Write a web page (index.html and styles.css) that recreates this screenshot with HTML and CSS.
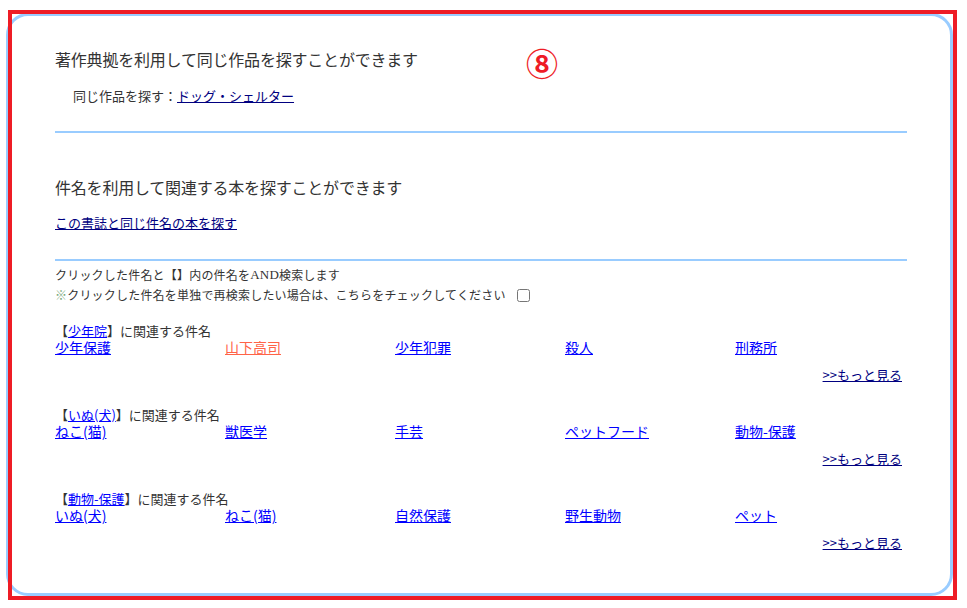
FILE: index.html
```html
<!DOCTYPE html>
<html lang="ja">
<head>
    <meta charset="UTF-8">
    <title>件名検索</title>
    <link rel="stylesheet" href="styles.css">
</head>
<body>
    <div class="panel">
        <h2 class="title">著作典拠を利用して同じ作品を探すことができます</h2>
        <p class="same-work">同じ作品を探す：<a class="nav-link" href="#">ドッグ・シェルター</a></p>

        <div class="rule rule-1"></div>

        <h2 class="title title-2">件名を利用して関連する本を探すことができます</h2>
        <p class="same-subject"><a class="nav-link" href="#">この書誌と同じ件名の本を探す</a></p>

        <div class="rule rule-2"></div>

        <div class="notes">
            <p>クリックした件名と【】内の件名を<span class="serif">AND</span>検索します</p>
            <p><span class="mark">※</span>クリックした件名を単独で再検索したい場合は、こちらをチェックしてください<input type="checkbox" class="single"></p>
        </div>

        <div class="group">
            <p class="group-label">【<a href="#">少年院</a>】に関連する件名</p>
            <ul class="subjects">
                <li><a href="#">少年保護</a></li>
                <li><a href="#" class="visited">山下高司</a></li>
                <li><a href="#">少年犯罪</a></li>
                <li><a href="#">殺人</a></li>
                <li><a href="#">刑務所</a></li>
            </ul>
            <p class="more"><a class="nav-link" href="#">&gt;&gt;もっと見る</a></p>
        </div>

        <div class="group">
            <p class="group-label">【<a href="#">いぬ(犬)</a>】に関連する件名</p>
            <ul class="subjects">
                <li><a href="#">ねこ(猫)</a></li>
                <li><a href="#">獣医学</a></li>
                <li><a href="#">手芸</a></li>
                <li><a href="#">ペットフード</a></li>
                <li><a href="#">動物-保護</a></li>
            </ul>
            <p class="more"><a class="nav-link" href="#">&gt;&gt;もっと見る</a></p>
        </div>

        <div class="group">
            <p class="group-label">【<a href="#">動物-保護</a>】に関連する件名</p>
            <ul class="subjects">
                <li><a href="#">いぬ(犬)</a></li>
                <li><a href="#">ねこ(猫)</a></li>
                <li><a href="#">自然保護</a></li>
                <li><a href="#">野生動物</a></li>
                <li><a href="#">ペット</a></li>
            </ul>
            <p class="more"><a class="nav-link" href="#">&gt;&gt;もっと見る</a></p>
        </div>
    </div>

    <!-- annotation overlay -->
    <div class="marker-box"></div>
    <div class="marker-num">⑧</div>
</body>
</html>
```

FILE: styles.css
```css
* {
    margin: 0;
    padding: 0;
    box-sizing: border-box;
}

body {
    font-family: "Noto Sans CJK JP", "Noto Sans", sans-serif;
    color: #333;
    background: #fff;
    width: 967px;
    height: 608px;
    overflow: hidden;
    position: relative;
}

a {
    color: #0000ff;
    text-decoration: underline;
}

a.nav-link {
    color: #000080;
}

a.visited {
    color: #ff6347;
}

.panel {
    margin: 13px 0 0 6px;
    width: 947px;
    height: 583px;
    border: 3px solid #99ccff;
    border-radius: 22px;
    padding: 33px 43px 0 46px;
}

.title {
    font-size: 16px;
    font-weight: normal;
    line-height: 20px;
    letter-spacing: -0.2px;
}

.title-2 {
    margin-top: 44px;
}

.same-work {
    font-size: 13px;
    line-height: 18px;
    margin-top: 18px;
    padding-left: 18px;
}

.same-subject {
    font-size: 13px;
    line-height: 18px;
    margin-top: 17px;
}

.rule {
    height: 2px;
    background: #99ccff;
}

.rule-1 {
    margin-top: 26px;
}

.rule-2 {
    margin-top: 27px;
}

.notes {
    margin-top: 4px;
    font-size: 12px;
    line-height: 20px;
    letter-spacing: 0.2px;
}

.notes p {
    display: flex;
    align-items: center;
}

.serif {
    font-family: "Liberation Serif", serif;
    font-size: 13px;
}

.mark {
    color: #7aa87a;
}

.single {
    width: 13px;
    height: 13px;
    margin-left: 11px;
}

.group {
    margin-top: 18px;
}

.group + .group {
    margin-top: 24px;
}

.group-label {
    font-size: 13px;
    line-height: 16px;
}

.subjects {
    list-style: none;
    display: grid;
    grid-template-columns: repeat(5, 170px);
    font-size: 14px;
    line-height: 16px;
}

.more {
    margin-top: 12px;
    text-align: right;
    padding-right: 5px;
    font-size: 13px;
    line-height: 16px;
}

.marker-box {
    position: absolute;
    left: 8px;
    top: 10px;
    width: 949px;
    height: 590px;
    border: 4px solid #ee1c25;
}

.marker-num {
    position: absolute;
    left: 526px;
    top: 42px;
    font-size: 32px;
    line-height: 40px;
    font-weight: bold;
    color: #ee1c25;
}
```
